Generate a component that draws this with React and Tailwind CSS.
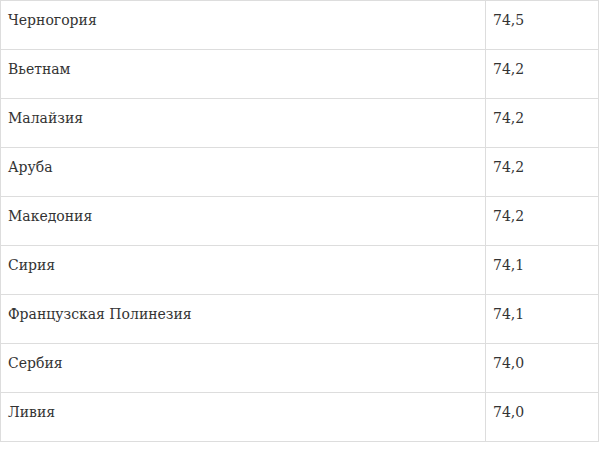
const rows = [
  ["Черногория", "74,5"],
  ["Вьетнам", "74,2"],
  ["Малайзия", "74,2"],
  ["Аруба", "74,2"],
  ["Македония", "74,2"],
  ["Сирия", "74,1"],
  ["Французская Полинезия", "74,1"],
  ["Сербия", "74,0"],
  ["Ливия", "74,0"],
];

export default function App() {
  return (
    <div className="w-[600px] h-[462px] bg-white" style={{ fontFamily: '"DejaVu Serif", serif' }}>
      <div className="w-[599px] border-l border-t border-[#dddddd] text-[14px] text-[#333333]">
        {rows.map(([name, val]) => (
          <div key={name} className="flex h-[49px] border-b border-[#dddddd]">
            <div className="w-[485px] border-r border-[#dddddd] pl-[7px] pt-[9px] leading-[20px]">{name}</div>
            <div className="flex-1 border-r border-[#dddddd] pl-[7px] pt-[9px] leading-[20px]">{val}</div>
          </div>
        ))}
      </div>
    </div>
  );
}
